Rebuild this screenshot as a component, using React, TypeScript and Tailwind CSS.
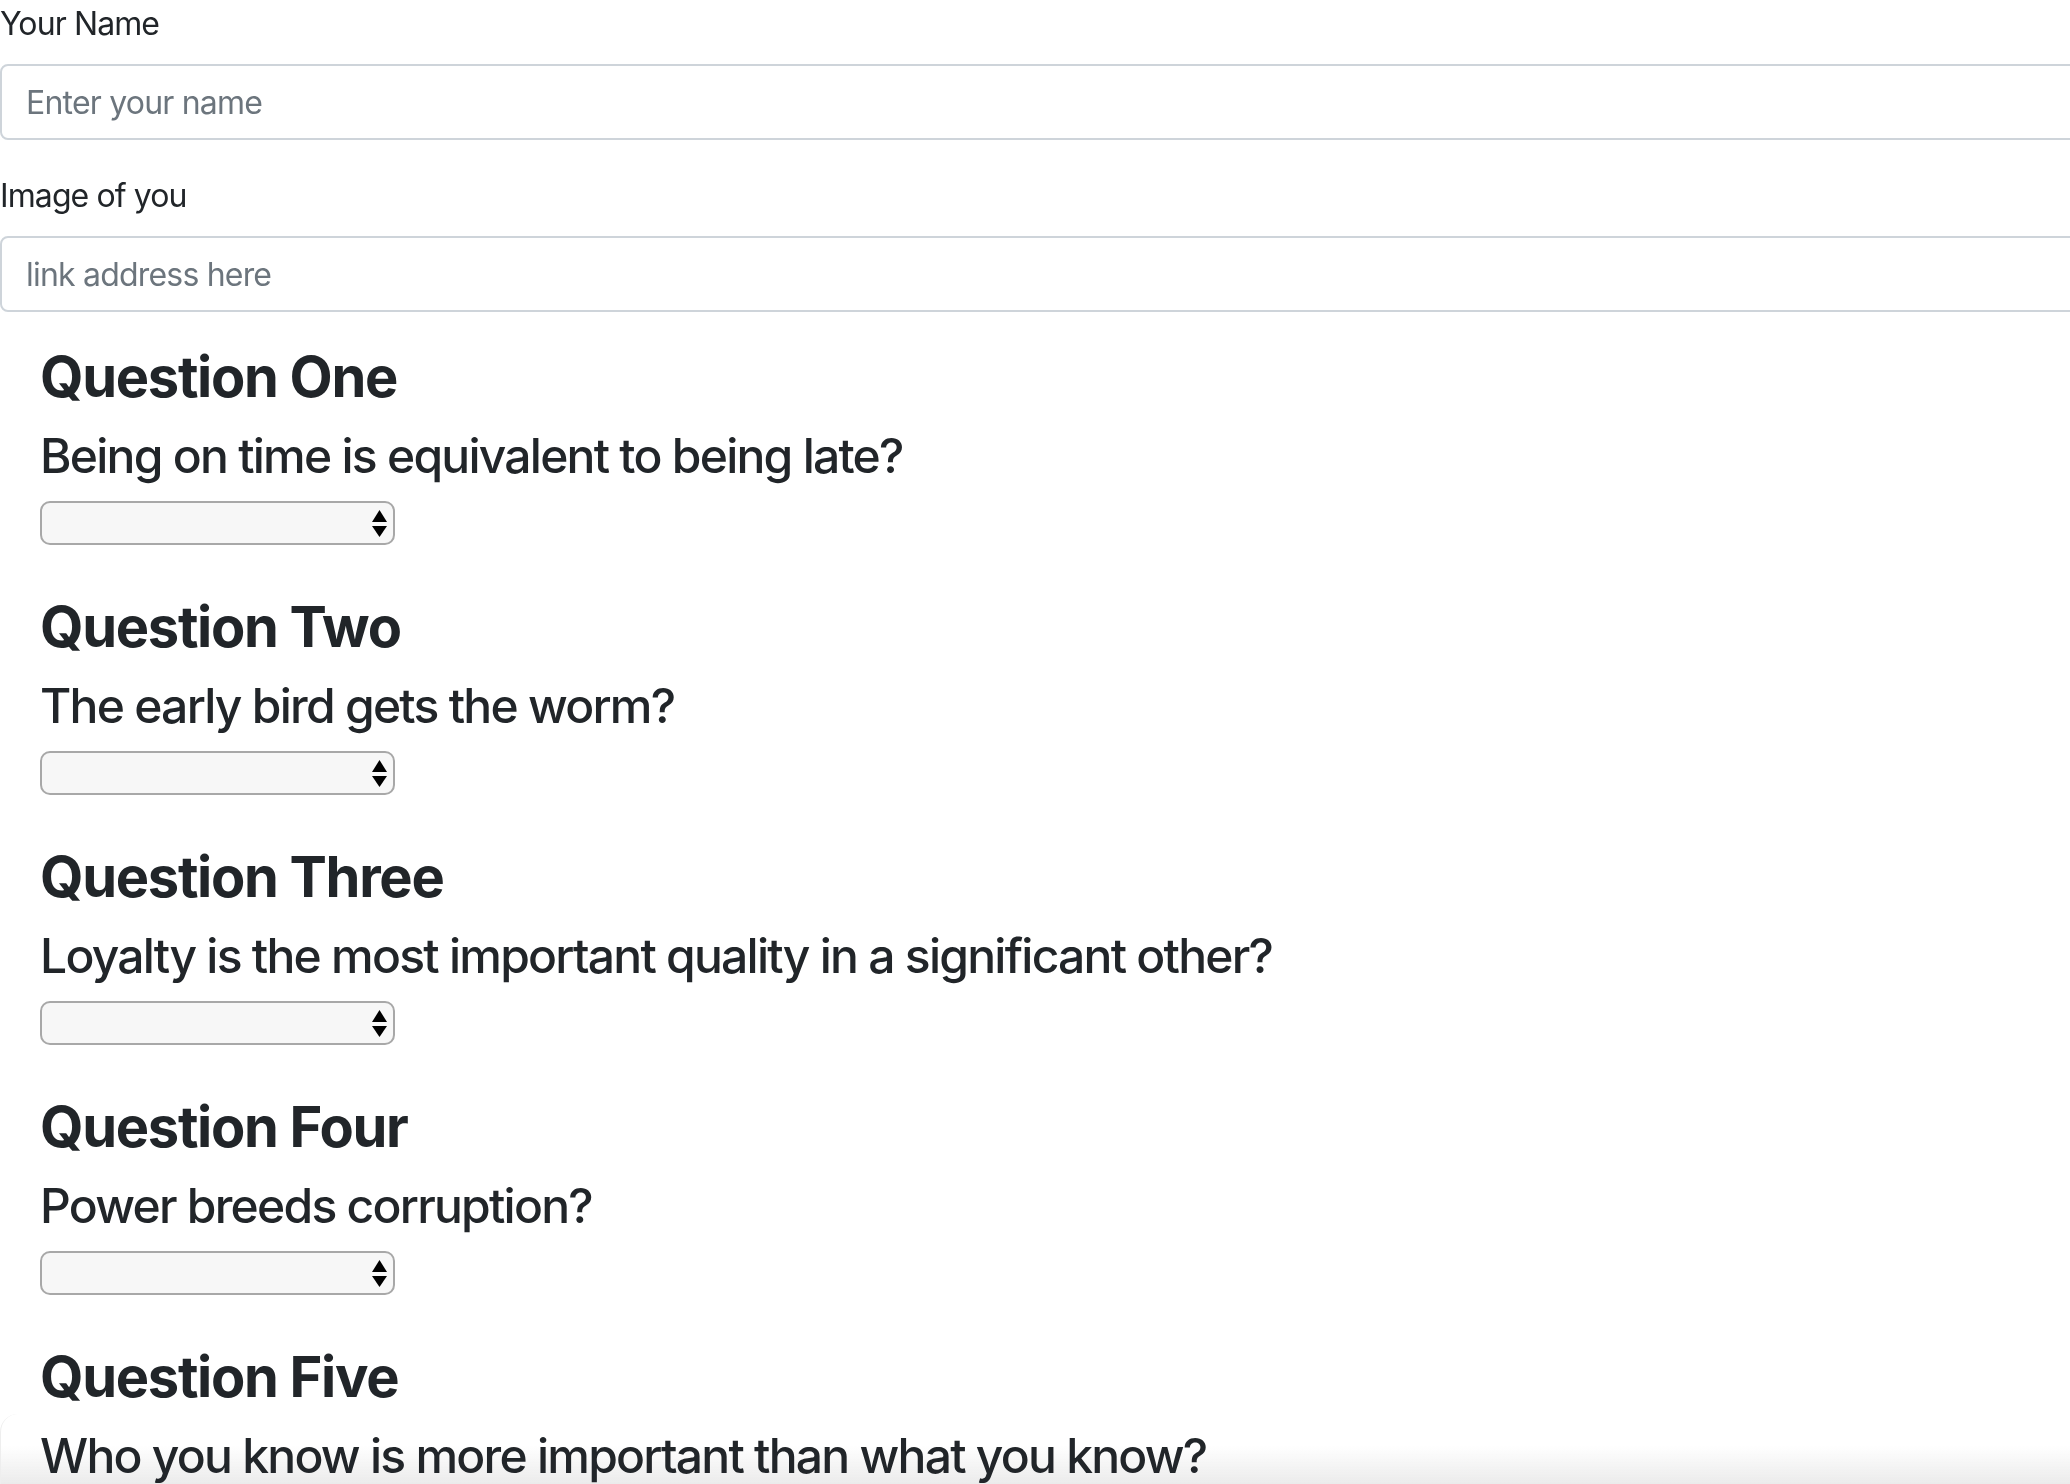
import React from "react";

const questions = [
  { title: "Question One", text: "Being on time is equivalent to being late?" },
  { title: "Question Two", text: "The early bird gets the worm?" },
  { title: "Question Three", text: "Loyalty is the most important quality in a significant other?" },
  { title: "Question Four", text: "Power breeds corruption?" },
  { title: "Question Five", text: "Who you know is more important than what you know?" },
];

function Field({ label, placeholder }: { label: string; placeholder: string }) {
  return (
    <div className="mb-8">
      <label className="block mb-4 text-[32px] leading-[48px] tracking-[-0.9px]">{label}</label>
      <input
        type="text"
        placeholder={placeholder}
        className="block w-[2200px] h-[76px] px-6 text-[32px] tracking-[-0.8px] rounded-lg border-2 border-[#ced4da] bg-white text-[#495057] placeholder:text-[#6c757d] outline-none"
      />
    </div>
  );
}

function Picker() {
  return (
    <div className="relative w-[355px] h-[44px]">
      <select className="appearance-none block w-full h-full rounded-[10px] border-2 border-[#a8a8a8] bg-[#f7f7f7] outline-none" />
      <svg
        className="pointer-events-none absolute right-[8px] top-[9px]"
        width="15"
        height="28"
        viewBox="0 0 15 28"
      >
        <path d="M7.5 0 L15 12 L0 12 Z" fill="#000" />
        <path d="M0 16 L15 16 L7.5 27 Z" fill="#000" />
      </svg>
    </div>
  );
}

export default function App() {
  return (
    <div className="relative isolate min-h-screen overflow-hidden bg-white text-[#212529] font-['Inter','Liberation_Sans',sans-serif]">
      <form>
        <Field label="Your Name" placeholder="Enter your name" />
        <Field label="Image of you" placeholder="link address here" />

        <div className="flex flex-col gap-[49px] pl-10">
          {questions.map((q) => (
            <div key={q.title}>
              <h3 className="mb-4 text-[56px] leading-[67px] font-bold tracking-[-1.3px]">{q.title}</h3>
              <h4 className="mb-4 text-[48px] leading-[58px] font-medium tracking-[-1.75px]">{q.text}</h4>
              <Picker />
            </div>
          ))}
        </div>
      </form>

      {/* soft shade along the bottom edge */}
      <div className="fixed bottom-0 left-0 right-0 -z-10 h-[70px] rounded-tl-[18px] border-l border-[#eeeeee] bg-linear-to-b from-transparent from-45% to-[#ebebeb] pointer-events-none" />
    </div>
  );
}
